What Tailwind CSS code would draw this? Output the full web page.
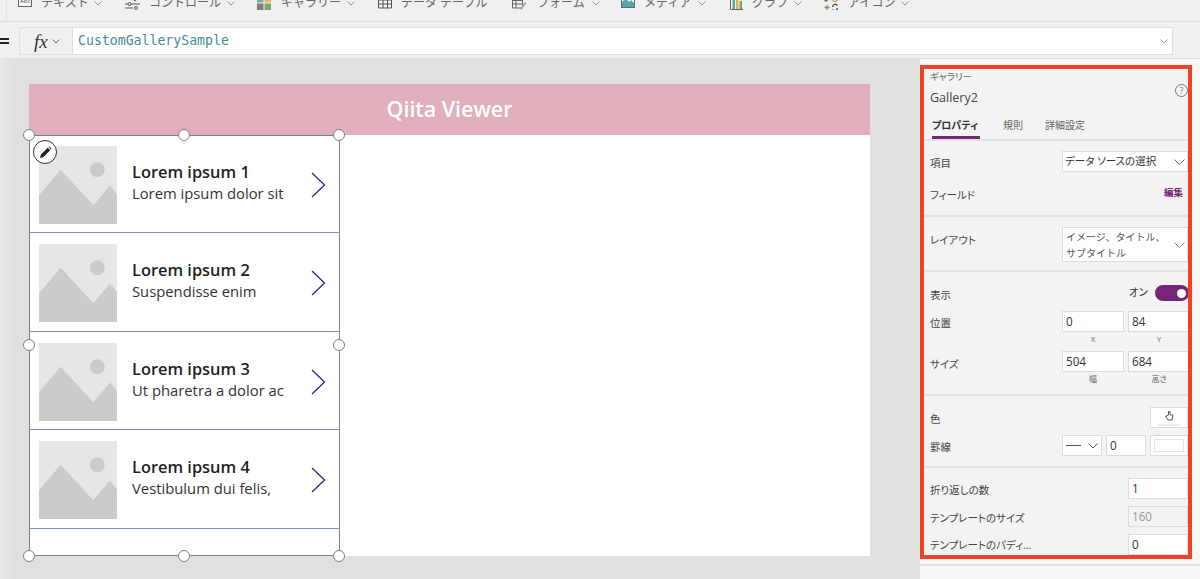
<!DOCTYPE html>
<html lang="ja">
<head>
<meta charset="utf-8">
<script src="https://cdn.jsdelivr.net/npm/@tailwindcss/browser@4"></script>
<title>Qiita Viewer</title>
</head>
<body class="w-[1200px] h-[579px] overflow-hidden bg-[#f0f0f0] font-['Open_Sans','Noto_Sans_CJK_JP',sans-serif] text-[#444] [font-feature-settings:'palt']">

<!-- ribbon -->
<div class="h-[22px] overflow-hidden border-b border-[#dcdcdc] relative">
  <div class="absolute left-[6px] top-0 h-full w-px bg-[#e2e2e2]"></div>
  <div class="flex items-center h-[14px] -mt-[4px] text-[12px] text-[#666] whitespace-nowrap [font-feature-settings:normal]">
    <svg class="ml-[18px] -mt-[4px] w-[14px] h-[14px]" viewBox="0 0 14 14"><rect x=".5" y=".5" width="13" height="12" fill="#fff" stroke="#666"/><text x="2" y="9" font-size="6" fill="#444" font-family="Open Sans">Abc</text></svg>
    <span class="ml-[9px] w-[47px]">テキスト</span>
    <svg class="ml-[6px] w-[8px] h-[5px]" viewBox="0 0 8 5"><path d="M.5.5 4 4 7.5.5" fill="none" stroke="#999"/></svg>
    <svg class="ml-[23px] w-[15px] h-[14px]" viewBox="0 0 15 14"><path d="M1 3h13M0 8h15M0 12h8" stroke="#555"/><circle cx="10" cy="3" r="1.500" fill="#f0f0f0" stroke="#555"/><circle cx="4.500" cy="8" r="1.500" fill="#f0f0f0" stroke="#555"/><circle cx="11" cy="12" r="1.500" fill="#f0f0f0" stroke="#555"/></svg>
    <span class="ml-[9px] w-[71px]">コントロール</span>
    <svg class="ml-[7px] w-[8px] h-[5px]" viewBox="0 0 8 5"><path d="M.5.5 4 4 7.5.5" fill="none" stroke="#999"/></svg>
    <svg class="ml-[22px] w-[14px] h-[14px]" viewBox="0 0 14 14"><rect width="6.500" height="6.500" fill="#7fa6a8"/><rect x="7.500" width="6.500" height="6.500" fill="#e8b85a"/><rect y="7.500" width="6.500" height="6.500" fill="#808080"/><rect x="7.500" y="7.500" width="6.500" height="6.500" fill="#74ad74"/></svg>
    <span class="ml-[10px] w-[60px]">ギャラリー</span>
    <svg class="ml-[6px] w-[8px] h-[5px]" viewBox="0 0 8 5"><path d="M.5.5 4 4 7.5.5" fill="none" stroke="#999"/></svg>
    <svg class="ml-[23px] -mt-[3px] w-[14px] h-[14px]" viewBox="0 0 14 14"><path d="M.5 1h13v12H.5zM.5 5h13M.5 9h13M5 1v12M9.500 1v12" fill="none" stroke="#555"/></svg>
    <span class="ml-[9px] w-[90px]">データ テーブル</span>
    <svg class="ml-[21px] w-[15px] h-[14px]" viewBox="0 0 15 14"><path d="M.5 1h10v11H.5zM.5 4.500h10M.5 8h10M4 1v11" fill="none" stroke="#666"/><path d="M8 13l5-7 1.500 1-5 7z" fill="#7fb3b8"/></svg>
    <span class="ml-[10px] w-[48px]">フォーム</span>
    <svg class="ml-[7px] w-[8px] h-[5px]" viewBox="0 0 8 5"><path d="M.5.5 4 4 7.5.5" fill="none" stroke="#999"/></svg>
    <svg class="ml-[21px] -mt-[4px] w-[14px] h-[14px]" viewBox="0 0 14 14"><rect x=".5" y=".5" width="13" height="13" fill="#fff" stroke="#666"/><path d="M1 13V8l4-4 3 4 2-2 3 3v4z" fill="#5aa5ac"/></svg>
    <span class="ml-[9px] w-[47px]">メディア</span>
    <svg class="ml-[7px] w-[8px] h-[5px]" viewBox="0 0 8 5"><path d="M.5.5 4 4 7.500.5" fill="none" stroke="#999"/></svg>
    <svg class="ml-[24px] -mt-[1px] w-[13px] h-[14px]" viewBox="0 0 13 14"><path d="M.5 0v13.500H13" fill="none" stroke="#666"/><rect x="2.500" y="4" width="2.500" height="9" fill="#5aa5ac"/><rect x="6" y="1" width="2.500" height="12" fill="#e8b04a"/><rect x="9.500" y="5" width="2.500" height="8" fill="#6fa96f"/></svg>
    <span class="ml-[9px] w-[38px]">グラフ</span>
    <svg class="ml-[4px] w-[8px] h-[5px]" viewBox="0 0 8 5"><path d="M.5.5 4 4 7.500.5" fill="none" stroke="#999"/></svg>
    <svg class="ml-[22px] w-[15px] h-[14px]" viewBox="0 0 15 14"><path d="M2 2v4M0 4h4" stroke="#444"/><circle cx="11" cy="3" r="2.500" fill="none" stroke="#d9705a"/><path d="M3 9v5M.5 11.500h5" stroke="#5f9f5f" stroke-width="1.300"/><path d="M8.500 11a2.800 2.800 0 0 1 5-1.500M13.500 12a2.800 2.800 0 0 1-5 1.500" fill="none" stroke="#444" stroke-width="1.200"/></svg>
    <span class="ml-[9px] w-[46px]">アイコン</span>
    <svg class="ml-[7px] w-[8px] h-[5px]" viewBox="0 0 8 5"><path d="M.5.5 4 4 7.500.5" fill="none" stroke="#999"/></svg>
  </div>
</div>

<!-- formula bar -->
<div class="h-[37px] flex items-center border-b border-[#dedede] pt-[2px]">
  <div class="w-[19px] flex flex-col gap-[2px]">
    <div class="w-[9px] h-[2px] bg-[#222]"></div>
    <div class="w-[9px] h-[2px] bg-[#222]"></div>
  </div>
  <div class="w-[1154px] h-[28px] flex border border-[#e0e0e0] bg-white">
    <div class="w-[53px] bg-[#f0f0f0] border-r border-[#e0e0e0] flex items-center pl-[14px]">
      <span class="font-['Liberation_Serif',serif] italic text-[19px] leading-none text-[#333]">fx</span>
      <svg class="ml-[4px] w-[8px] h-[5px]" viewBox="0 0 8 5"><path d="M.5.5 4 4 7.500.5" fill="none" stroke="#777"/></svg>
    </div>
    <div class="flex-1 flex items-center pl-[5px] font-['DejaVu_Sans_Mono',monospace] text-[13.2px] text-[#3f8e97]">CustomGallerySample</div>
    <svg class="mr-[4px] self-center w-[8px] h-[5px]" viewBox="0 0 8 5"><path d="M.5.5 4 4 7.500.5" fill="none" stroke="#999"/></svg>
  </div>
</div>

<div class="flex h-[520px]">
  <!-- canvas -->
  <div class="w-[919px] h-full bg-[linear-gradient(90deg,#e8e8e8,#e0e0e0_14px)] pt-[25px] pl-[29px] relative">
    <div class="w-[841px] h-[472px] bg-white flex flex-col">
      <div class="h-[51px] bg-[#e0afbb] flex items-center justify-center text-white font-semibold text-[21.400px]">Qiita Viewer</div>
      <div class="w-[311px] h-[422px] border-x border-b border-[#808080] shadow-[inset_0_1px_0_#808080] flex flex-col">

        <div class="h-[98.500px] border-b border-[#7f8fc4] flex items-center pl-[9px] pt-[2px] shrink-0">
          <svg class="w-[78px] h-[78px] shrink-0" viewBox="0 0 79 79"><rect width="79" height="79" fill="#e6e6e6"/><circle cx="59" cy="24" r="7.500" fill="#cbcbca"/><path d="M0 50 22 24l33 36 17-20 7 9v30H0z" fill="#cbcbca"/></svg>
          <div class="ml-[15px] -mt-[5px] w-[164px] text-[#1f1f1f] whitespace-nowrap overflow-hidden">
            <div class="text-[16.400px] leading-[22px] font-semibold">Lorem ipsum 1</div>
            <div class="text-[14.800px] leading-[21px] text-[#333]">Lorem ipsum dolor sit</div>
          </div>
          <svg class="ml-[15px] w-[15px] h-[26px]" viewBox="0 0 15 26"><path d="M1 1l12.500 12L1 25" fill="none" stroke="#1f2f86" stroke-width="1.300"/></svg>
        </div>

        <div class="h-[98.500px] border-b border-[#7f8fc4] flex items-center pl-[9px] pt-[2px] shrink-0">
          <svg class="w-[78px] h-[78px] shrink-0" viewBox="0 0 79 79"><rect width="79" height="79" fill="#e6e6e6"/><circle cx="59" cy="24" r="7.500" fill="#cbcbca"/><path d="M0 50 22 24l33 36 17-20 7 9v30H0z" fill="#cbcbca"/></svg>
          <div class="ml-[15px] -mt-[5px] w-[164px] text-[#1f1f1f] whitespace-nowrap overflow-hidden">
            <div class="text-[16.400px] leading-[22px] font-semibold">Lorem ipsum 2</div>
            <div class="text-[14.800px] leading-[21px] text-[#333]">Suspendisse enim</div>
          </div>
          <svg class="ml-[15px] w-[15px] h-[26px]" viewBox="0 0 15 26"><path d="M1 1l12.500 12L1 25" fill="none" stroke="#1f2f86" stroke-width="1.300"/></svg>
        </div>

        <div class="h-[98.500px] border-b border-[#7f8fc4] flex items-center pl-[9px] pt-[2px] shrink-0">
          <svg class="w-[78px] h-[78px] shrink-0" viewBox="0 0 79 79"><rect width="79" height="79" fill="#e6e6e6"/><circle cx="59" cy="24" r="7.500" fill="#cbcbca"/><path d="M0 50 22 24l33 36 17-20 7 9v30H0z" fill="#cbcbca"/></svg>
          <div class="ml-[15px] -mt-[5px] w-[164px] text-[#1f1f1f] whitespace-nowrap overflow-hidden">
            <div class="text-[16.400px] leading-[22px] font-semibold">Lorem ipsum 3</div>
            <div class="text-[14.800px] leading-[21px] text-[#333]">Ut pharetra a dolor ac</div>
          </div>
          <svg class="ml-[15px] w-[15px] h-[26px]" viewBox="0 0 15 26"><path d="M1 1l12.500 12L1 25" fill="none" stroke="#1f2f86" stroke-width="1.300"/></svg>
        </div>

        <div class="h-[98.500px] border-b border-[#7f8fc4] flex items-center pl-[9px] pt-[2px] shrink-0">
          <svg class="w-[78px] h-[78px] shrink-0" viewBox="0 0 79 79"><rect width="79" height="79" fill="#e6e6e6"/><circle cx="59" cy="24" r="7.500" fill="#cbcbca"/><path d="M0 50 22 24l33 36 17-20 7 9v30H0z" fill="#cbcbca"/></svg>
          <div class="ml-[15px] -mt-[5px] w-[164px] text-[#1f1f1f] whitespace-nowrap overflow-hidden">
            <div class="text-[16.400px] leading-[22px] font-semibold">Lorem ipsum 4</div>
            <div class="text-[14.800px] leading-[21px] text-[#333]">Vestibulum dui felis,</div>
          </div>
          <svg class="ml-[15px] w-[15px] h-[26px]" viewBox="0 0 15 26"><path d="M1 1l12.500 12L1 25" fill="none" stroke="#1f2f86" stroke-width="1.300"/></svg>
        </div>
      </div>
    </div>

    <!-- selection handles -->
    <div class="absolute left-[23px] top-[70px] w-[12px] h-[12px] rounded-full bg-white border border-[#808080]"></div>
    <div class="absolute left-[178px] top-[70px] w-[12px] h-[12px] rounded-full bg-white border border-[#808080]"></div>
    <div class="absolute left-[333px] top-[70px] w-[12px] h-[12px] rounded-full bg-white border border-[#808080]"></div>
    <div class="absolute left-[23px] top-[280px] w-[12px] h-[12px] rounded-full bg-white border border-[#808080]"></div>
    <div class="absolute left-[333px] top-[280px] w-[12px] h-[12px] rounded-full bg-white border border-[#808080]"></div>
    <div class="absolute left-[23px] top-[491px] w-[12px] h-[12px] rounded-full bg-white border border-[#808080]"></div>
    <div class="absolute left-[178px] top-[491px] w-[12px] h-[12px] rounded-full bg-white border border-[#808080]"></div>
    <div class="absolute left-[333px] top-[491px] w-[12px] h-[12px] rounded-full bg-white border border-[#808080]"></div>
    <!-- edit badge -->
    <div class="absolute left-[33px] top-[81px] w-[24px] h-[24px] rounded-full bg-white border-[1.500px] border-[#333] flex items-center justify-center">
      <svg class="w-[13px] h-[13px]" viewBox="0 0 13 13"><path d="M1 12l.8-3.200L8.800 1.800l2.400 2.400-7 7zM9.600 1l.8-.5 2.100 2.100-.5.8z" fill="#222"/></svg>
    </div>
  </div>

  <!-- properties panel -->
  <div class="w-[281px] h-full bg-[#f8f8f8] border-l border-[#dcdcdc] flex flex-col">
    <div class="h-[6px]"></div>
    <div class="w-[272px] h-[494px] border-4 border-[#ef4123] bg-[#f3f3f3] overflow-hidden text-[10.500px] text-[#444] flex flex-col shrink-0">
      <div class="h-[72px] pl-[6px] pt-[2px] border-b-2 border-[#e2e2e2] relative shrink-0">
        <div class="text-[9.500px] leading-[12px] text-[#666]">ギャラリー</div>
        <div class="mt-[6px] text-[12.500px] leading-[18px] text-[#444]">Gallery2</div>
        <svg class="absolute right-0 top-[15px] w-[13px] h-[13px]" viewBox="0 0 13 13"><circle cx="6.500" cy="6.500" r="6" fill="none" stroke="#777"/><text x="6.500" y="10" text-anchor="middle" font-size="9" fill="#777" font-family="Open Sans">?</text></svg>
        <div class="absolute left-[8px] bottom-0 flex items-end text-[#666] text-[10px] leading-[12px]">
          <div class="w-[48px] h-[22px] pt-[2px] border-b-[3px] border-[#742774] font-bold text-[#333]">プロパティ</div>
          <div class="ml-[23px] h-[22px] pt-[2px]">規則</div>
          <div class="ml-[22px] h-[22px] pt-[2px]">詳細設定</div>
        </div>
      </div>

      <div class="h-[76px] border-b-2 border-[#e2e2e2] px-[6px] flex flex-col shrink-0">
        <div class="h-[44px] pt-[10px] flex justify-between items-start">
          <span class="mt-[5px]">項目</span>
          <div class="-mr-[6px] w-[126px] h-[21px] bg-white border border-[#dcdcdc] flex items-center justify-between pl-[2px] pr-[2px] text-[#333]">データ ソースの選択
            <svg class="w-[11px] h-[6px]" viewBox="0 0 11 6"><path d="M.5.5l5 5 5-5" fill="none" stroke="#666"/></svg>
          </div>
        </div>
        <div class="flex justify-between items-start">
          <span class="mt-[3px]">フィールド</span>
          <span class="mr-[-1px] mt-[1px] text-[9.500px] text-[#742774] font-semibold">編集</span>
        </div>
      </div>

      <div class="h-[55px] border-b-2 border-[#e2e2e2] px-[6px] flex justify-between items-start pt-[10px] shrink-0">
        <span class="mt-[6px]">レイアウト</span>
        <div class="-mr-[6px] w-[126px] h-[35px] bg-white border border-[#dcdcdc] flex items-center justify-between pl-[3px] pr-[2px] leading-[16px] text-[10px] text-[#555] [font-feature-settings:normal]">
          <span>イメージ、タイトル、<br>サブタイトル</span>
          <svg class="w-[11px] h-[6px]" viewBox="0 0 11 6"><path d="M.5.5l5 5 5-5" fill="none" stroke="#888"/></svg>
        </div>
      </div>

      <div class="h-[124px] border-b-2 border-[#e2e2e2] pl-[6px] flex flex-col shrink-0">
        <div class="h-[39px] flex justify-between items-center pt-[3px]">
          <span class="mt-[6px]">表示</span>
          <div class="flex items-center gap-[7px] -mr-[1px]">
            <span class="text-[#333]">オン</span>
            <div class="w-[34px] h-[16px] rounded-full bg-[#742774] flex items-center justify-end pr-[3px]"><div class="w-[9px] h-[9px] rounded-full bg-white"></div></div>
          </div>
        </div>
        <div class="h-[40px] flex justify-between items-start">
          <span class="mt-[5px]">位置</span>
          <div class="flex gap-[4px] text-[11.700px] text-[#333] -mr-[2px]">
            <div class="w-[62px] text-center">
              <div class="h-[21px] bg-white border border-[#dcdcdc] text-left pl-[3px] leading-[19px]">0</div>
              <div class="text-[8px] leading-[14px] text-[#666]">X</div>
            </div>
            <div class="w-[62px] text-center">
              <div class="h-[21px] bg-white border border-[#dcdcdc] text-left pl-[3px] leading-[19px]">84</div>
              <div class="text-[8px] leading-[14px] text-[#666]">Y</div>
            </div>
          </div>
        </div>
        <div class="flex justify-between items-start">
          <span class="mt-[6px]">サイズ</span>
          <div class="flex gap-[4px] text-[11.700px] text-[#333] -mr-[2px]">
            <div class="w-[62px] text-center">
              <div class="h-[21px] bg-white border border-[#dcdcdc] text-left pl-[3px] leading-[19px]">504</div>
              <div class="text-[8px] leading-[14px] text-[#666]">幅</div>
            </div>
            <div class="w-[62px] text-center">
              <div class="h-[21px] bg-white border border-[#dcdcdc] text-left pl-[3px] leading-[19px]">684</div>
              <div class="text-[8px] leading-[14px] text-[#666]">高さ</div>
            </div>
          </div>
        </div>
      </div>

      <div class="h-[72px] border-b-2 border-[#e2e2e2] pl-[6px] pt-[11px] flex flex-col gap-[7px] shrink-0">
        <div class="h-[21px] flex justify-between items-center">
          <span class="mt-[4px]">色</span>
          <div class="w-[38px] h-[21px] bg-white border border-[#dcdcdc] flex flex-col items-center pt-[2px]">
            <svg class="w-[11px] h-[12px]" viewBox="0 0 11 12"><path d="M4.500 1.500h1.500v3l3 1-1 4.500H4L1.500 6.500 4.500 5z" fill="#fff" stroke="#555"/></svg>
            <div class="mt-[2px] w-[22px] h-[2px] bg-[#ececec]"></div>
          </div>
        </div>
        <div class="h-[21px] flex justify-between items-center">
          <span class="mt-[4px]">罫線</span>
          <div class="flex gap-[4px] text-[11.700px] text-[#333]">
            <div class="w-[40px] h-[21px] bg-white border border-[#dcdcdc] flex items-center justify-between px-[3px]">
              <div class="w-[15px] h-px bg-[#555]"></div>
              <svg class="w-[10px] h-[6px]" viewBox="0 0 10 6"><path d="M.5.5 5 5 9.500.5" fill="none" stroke="#555"/></svg>
            </div>
            <div class="w-[40px] h-[21px] bg-white border border-[#dcdcdc] pl-[3px] leading-[19px]">0</div>
            <div class="w-[38px] h-[21px] bg-white border border-[#dcdcdc] p-[3px]"><div class="h-full border border-[#e4e4e4] bg-white"></div></div>
          </div>
        </div>
      </div>

      <div class="flex-1 pl-[6px] pt-[10px] flex flex-col gap-[8px]">
        <div class="h-[20px] flex justify-between items-center">
          <span class="mt-[6px]">折り返しの数</span>
          <div class="w-[60px] h-[21px] bg-white border border-[#dcdcdc] pl-[3px] text-[11.700px] leading-[19px] text-[#333]">1</div>
        </div>
        <div class="h-[20px] flex justify-between items-center">
          <span class="mt-[5px]">テンプレートのサイズ</span>
          <div class="w-[60px] h-[21px] bg-[#f3f3f3] border border-[#dcdcdc] pl-[3px] text-[11.700px] leading-[19px] text-[#999]">160</div>
        </div>
        <div class="h-[20px] flex justify-between items-center">
          <span class="mt-[4px]">テンプレートのパディ…</span>
          <div class="w-[60px] h-[21px] bg-white border border-[#dcdcdc] pl-[3px] text-[11.700px] leading-[19px] text-[#333]">0</div>
        </div>
      </div>
    </div>
    <div class="flex-1">
      <div class="h-[7px] border-b-2 border-[#e2e2e2]"></div>
    </div>
  </div>
</div>
</body>
</html>
